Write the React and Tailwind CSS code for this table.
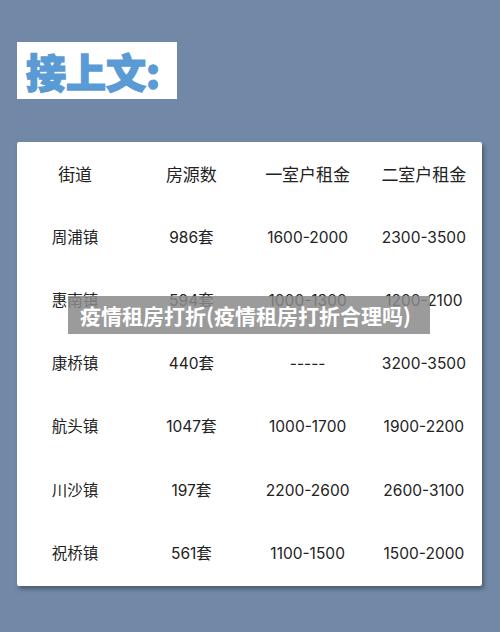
export default function App() {
  // Table data
  const headers = ['街道', '房源数', '一室户租金', '二室户租金']
  const rows = [
    ['周浦镇', '986套', '1600-2000', '2300-3500'],
    ['惠南镇', '594套', '1000-1300', '1200-2100'],
    ['康桥镇', '440套', '-----', '3200-3500'],
    ['航头镇', '1047套', '1000-1700', '1900-2200'],
    ['川沙镇', '197套', '2200-2600', '2600-3100'],
    ['祝桥镇', '561套', '1100-1500', '1500-2000'],
  ]

  return (
    <div
      className="relative w-[500px] h-[632px] bg-[#7189a6] overflow-hidden"
      style={{ fontFamily: '"Noto Sans CJK SC", "Noto Sans", sans-serif' }}
    >
      {/* Title label */}
      <div className="pt-[42px] pl-[17px]">
        <div className="w-[160px] h-[57px] bg-white flex items-center pl-[9px]">
          <span className="text-[40px] leading-none font-black text-[#5b9bd5] [-webkit-text-stroke:1.5px_#5b9bd5]">接上文:</span>
        </div>
      </div>

      {/* Rent table card */}
      <div className="mt-[43px] ml-[17px] w-[465px] bg-white rounded-[2px] shadow-[2px_3px_4px_rgba(0,0,0,0.35)] pb-[1px]">
        <div className="grid grid-cols-4 h-[63px] items-center text-[17px] text-[#222]">
          {headers.map(h => (
            <div key={h} className="text-center">{h}</div>
          ))}
        </div>
        {rows.map(r => (
          <div
            key={r[0]}
            className="grid grid-cols-4 h-[63.3px] items-center text-[15.5px] text-[#222] pt-[1px]"
            style={{ fontFamily: 'Inter, "Noto Sans CJK SC", sans-serif' }}
          >
            {r.map((c, i) => (
              <div key={i} className="text-center">{c}</div>
            ))}
          </div>
        ))}
      </div>

      {/* Caption overlay */}
      <div className="absolute left-[68px] top-[296px] w-[362px] h-[38px] bg-[#8a8a8a]/85 flex items-center pl-[12px]">
        <span className="text-white text-[21px] font-bold leading-none whitespace-nowrap">疫情租房打折(疫情租房打折合理吗)</span>
      </div>
    </div>
  )
}
